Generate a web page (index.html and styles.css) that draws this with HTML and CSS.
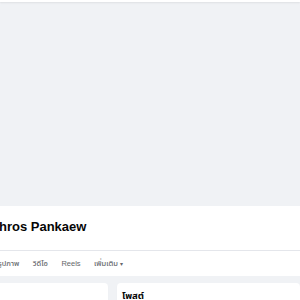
FILE: index.html
```html
<!DOCTYPE html>
<html lang="th">
<head>
<meta charset="utf-8">
<link rel="stylesheet" href="styles.css">
</head>
<body>
<div class="topbar"></div>
<div class="cover"></div>
<section class="header">
  <h1 class="name">hros Pankaew</h1>
  <nav class="tabs">
    <span class="tab">รูปภาพ</span>
    <span class="tab">วิดีโอ</span>
    <span class="tab">Reels</span>
    <span class="tab">เพิ่มเติม <span class="caret">▾</span></span>
  </nav>
</section>
<main class="content">
  <div class="card left"></div>
  <div class="card right"><h2 class="card-title">โพสต์</h2></div>
</main>
</body>
</html>
```

FILE: styles.css
```css
html, body {
  margin: 0;
  padding: 0;
  background: #f0f2f5;
  font-family: "Liberation Sans", "Noto Sans Thai", "Noto Sans", sans-serif;
  overflow: hidden;
}
.topbar {
  height: 2px;
  background: #ffffff;
  box-shadow: 0 1px 2px rgba(0,0,0,0.08);
  position: relative;
}
.cover {
  height: 204px;
  background: #f0f2f5;
}
.header {
  background: #ffffff;
  height: 70px;
  display: flex;
  flex-direction: column;
}
.name {
  margin: 0;
  padding: 11px 0 0 0;
  height: 33px;
  font-size: 13px;
  line-height: 20px;
  font-weight: 700;
  color: #050505;
  text-indent: -1px;
  border-bottom: 1px solid #e4e6eb;
}
.tabs {
  display: flex;
  align-items: center;
  gap: 13.5px;
  height: 24px;
  margin-left: -2px;
  font-size: 7.5px;
  font-weight: 500;
  color: #65676b;
}
.caret {
  font-size: 6px;
}
.content {
  display: grid;
  grid-template-columns: 108px 1fr;
  column-gap: 9px;
  padding-top: 7px;
}
.card {
  background: #ffffff;
  height: 60px;
  border-radius: 4px;
  box-shadow: 0 1px 1px rgba(0,0,0,0.05);
}
.left {
  border-top-left-radius: 0;
  border-bottom-left-radius: 0;
}
.card-title {
  margin: 0;
  padding: 6px 0 0 5px;
  font-size: 9.5px;
  font-weight: 700;
  color: #050505;
}
```
